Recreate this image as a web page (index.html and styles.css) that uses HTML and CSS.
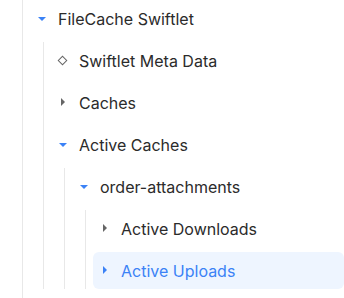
FILE: index.html
```html
<!DOCTYPE html>
<html lang="en">

<head>
    <meta charset="UTF-8">
    <meta name="viewport" content="width=device-width, initial-scale=1.0">
    <title>Swiftlet Tree</title>
    <link rel="stylesheet" href="styles.css">
</head>

<body>
    <div class="tree">
        <div class="node">
            <div class="row">
                <span class="icon caret-down"></span>
                <span class="label">FileCache Swiftlet</span>
            </div>
            <div class="children">
                <div class="row">
                    <span class="icon diamond"></span>
                    <span class="label">Swiftlet Meta Data</span>
                </div>
                <div class="row">
                    <span class="icon caret-right"></span>
                    <span class="label">Caches</span>
                </div>
                <div class="node">
                    <div class="row">
                        <span class="icon caret-down"></span>
                        <span class="label">Active Caches</span>
                    </div>
                    <div class="children">
                        <div class="node">
                            <div class="row">
                                <span class="icon caret-down"></span>
                                <span class="label">order-attachments</span>
                            </div>
                            <div class="children">
                                <div class="row">
                                    <span class="icon caret-right"></span>
                                    <span class="label">Active Downloads</span>
                                </div>
                                <div class="row selected">
                                    <span class="icon caret-right"></span>
                                    <span class="label">Active Uploads</span>
                                </div>
                            </div>
                        </div>
                    </div>
                </div>
            </div>
        </div>
    </div>
</body>

</html>
```

FILE: styles.css
```css
body {
    font-family: 'Inter', sans-serif;
    background-color: white;
    margin: 0;
    padding: 0;
}

.tree {
    margin-left: 22px;
    border-left: 1px solid #e8e8e8;
    padding-left: 7px;
    min-height: 298px;
    box-sizing: border-box;
}

.row {
    display: flex;
    align-items: center;
    height: 37px;
    margin-bottom: 5px;
    border-radius: 6px;
    font-size: 16px;
    color: #2b2b2b;
}

.row .icon {
    width: 23px;
    height: 37px;
    flex-shrink: 0;
    position: relative;
}

.row .label {
    padding-left: 5px;
}

.children {
    margin-left: 13px;
    border-left: 1px solid #e8e8e8;
    padding-left: 7px;
    margin-bottom: 5px;
}

.children .row:last-child {
    margin-bottom: 0;
}

.caret-down::after {
    content: "";
    position: absolute;
    left: 8px;
    top: 17px;
    border-left: 4px solid transparent;
    border-right: 4px solid transparent;
    border-top: 4px solid #3b82f6;
}

.caret-right::after {
    content: "";
    position: absolute;
    left: 10px;
    top: 14px;
    border-top: 4px solid transparent;
    border-bottom: 4px solid transparent;
    border-left: 4px solid #666;
}

.diamond::after {
    content: "";
    position: absolute;
    left: 8px;
    top: 15px;
    width: 5px;
    height: 5px;
    border: 1.5px solid #666;
    transform: rotate(45deg);
}

.selected {
    background-color: #eef5ff;
    color: #3b82f6;
}

.selected .caret-right::after {
    border-left-color: #3b82f6;
}
```
